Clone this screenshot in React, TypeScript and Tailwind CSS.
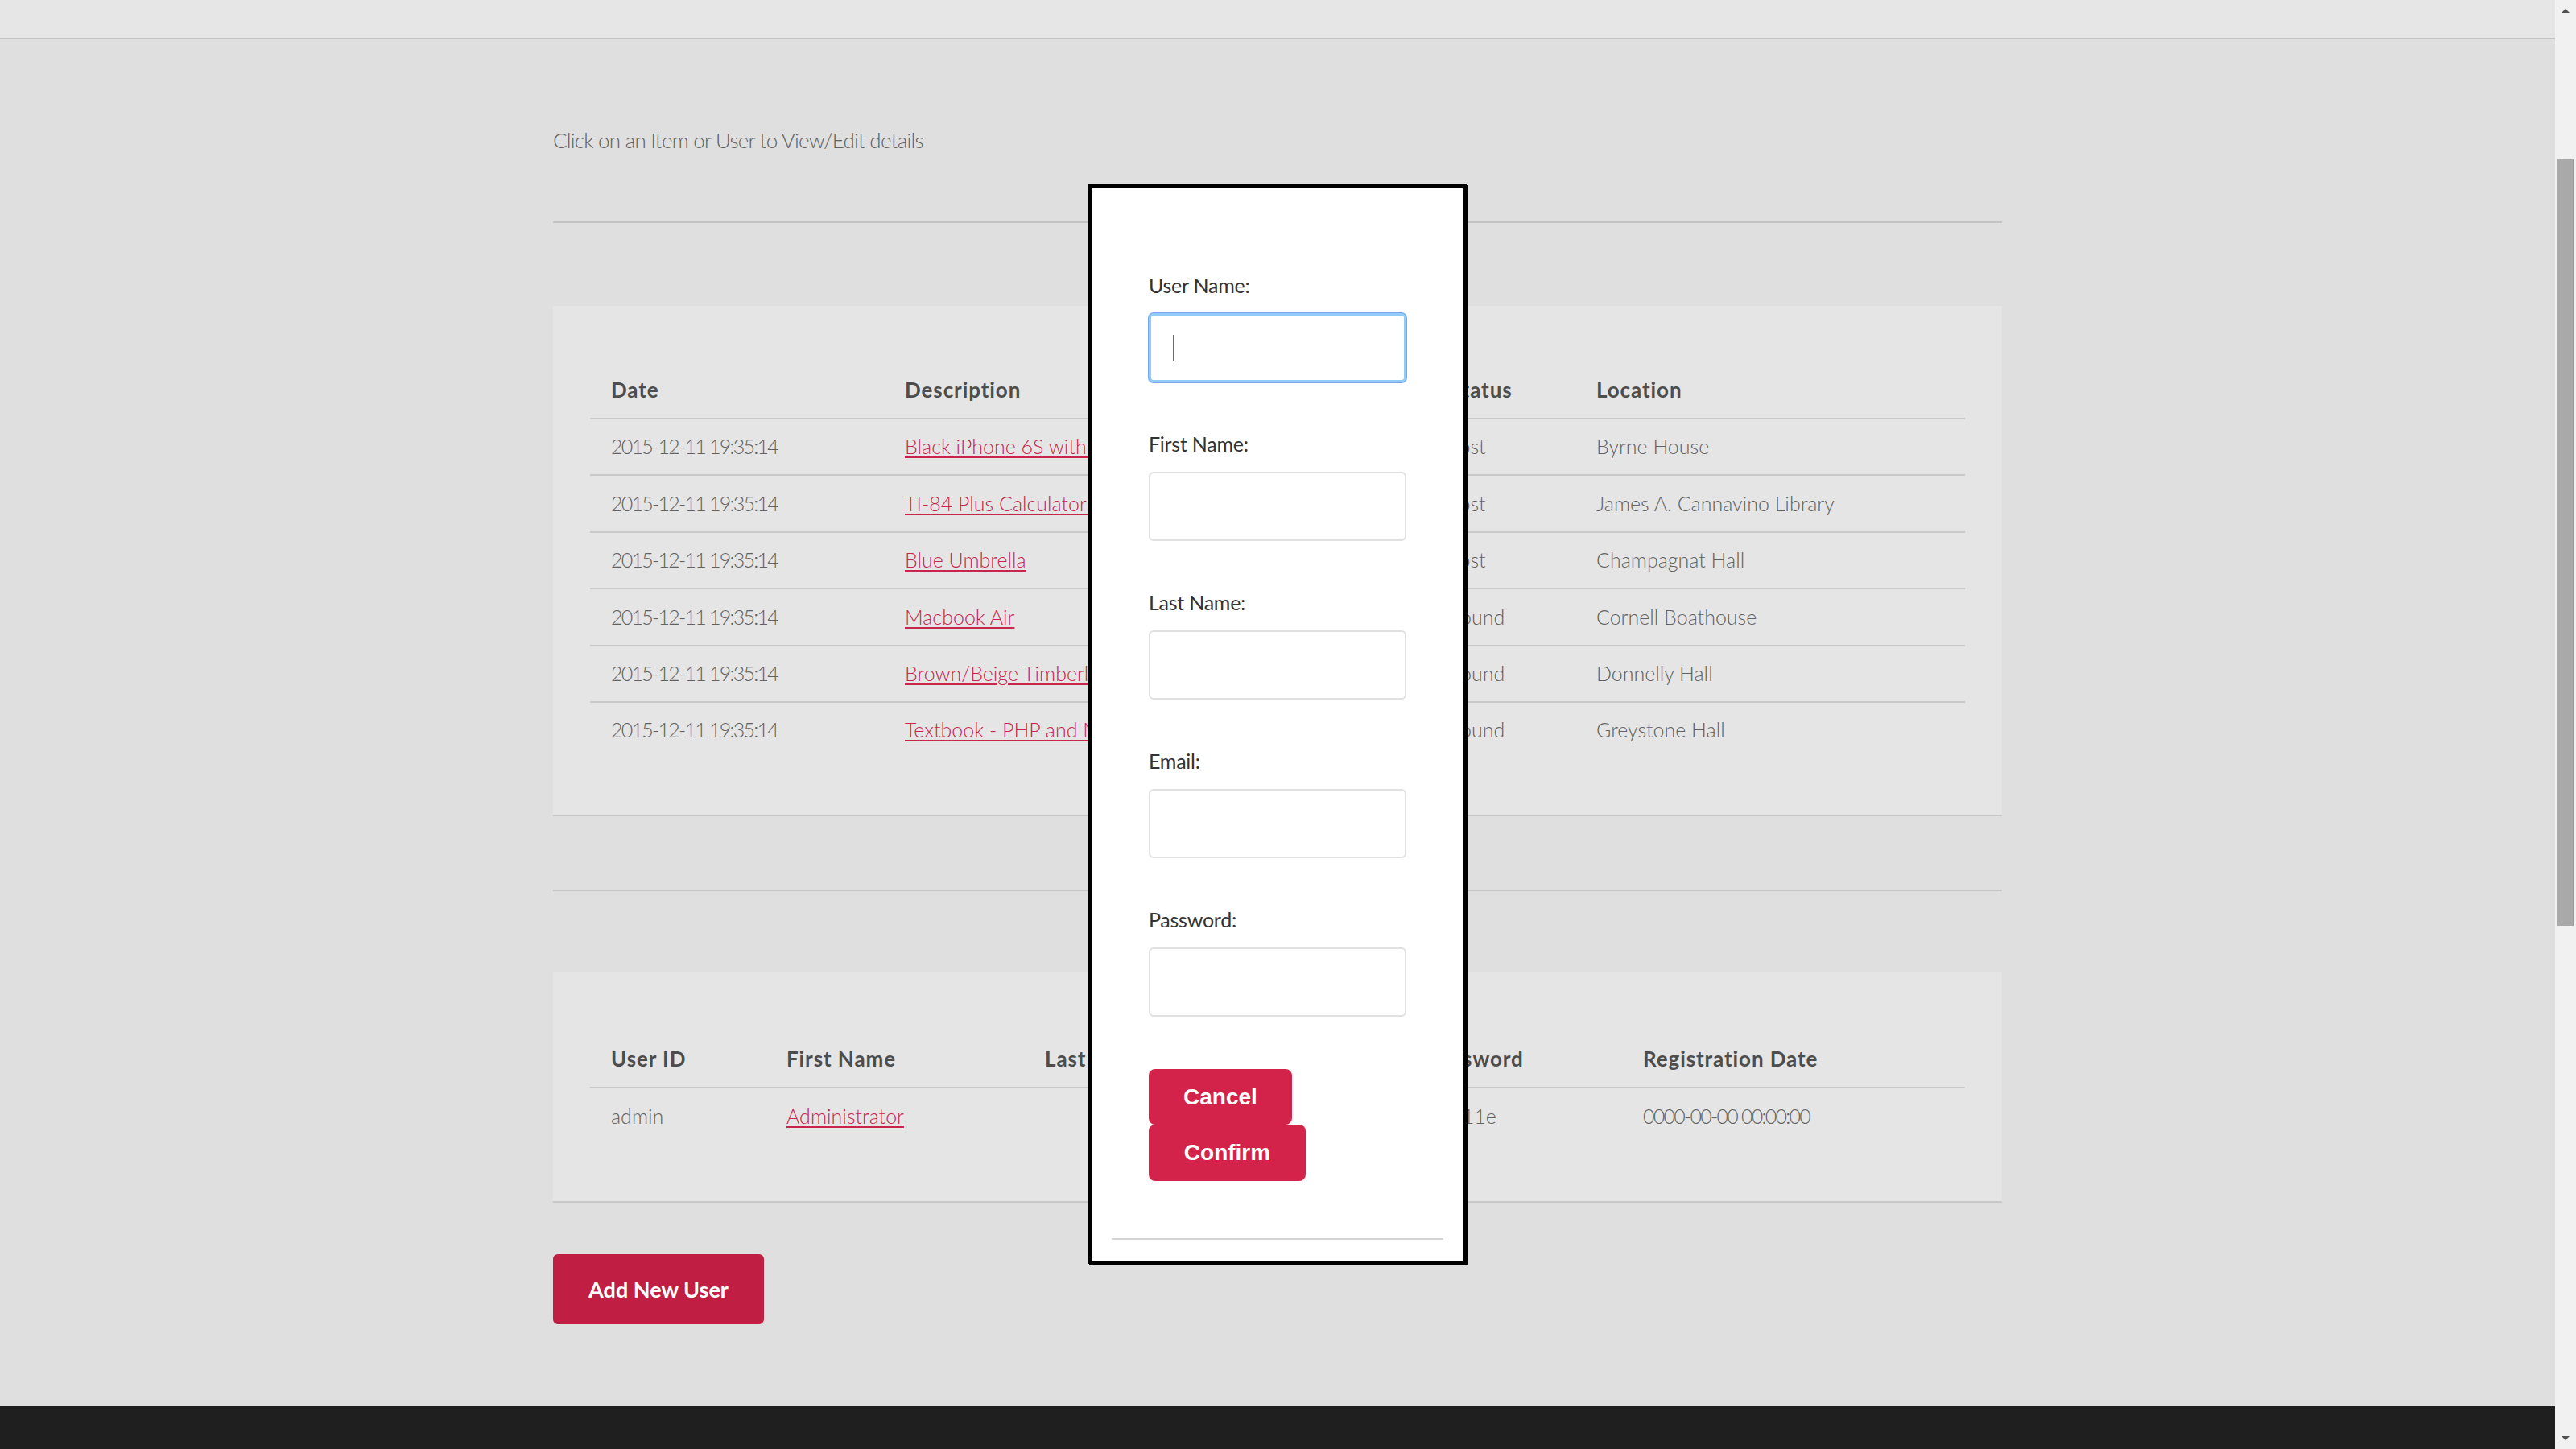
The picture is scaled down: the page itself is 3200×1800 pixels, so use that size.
import React from "react";

const items = [
  { desc: "Black iPhone 6S with red case", status: "Lost", loc: "Byrne House" },
  { desc: "TI-84 Plus Calculator - Silver", status: "Lost", loc: "James A. Cannavino Library" },
  { desc: "Blue Umbrella", status: "Lost", loc: "Champagnat Hall" },
  { desc: "Macbook Air", status: "Found", loc: "Cornell Boathouse" },
  { desc: "Brown/Beige Timberland Boots", status: "Found", loc: "Donnelly Hall" },
  { desc: "Textbook - PHP and MySQL", status: "Found", loc: "Greystone Hall" },
];

function Th({ children }: { children: React.ReactNode }) {
  return (
    <div className="pl-[26px] flex items-center font-bold text-[26px] text-[#4d4d4d] tracking-[0.035em] whitespace-nowrap">
      {children}
    </div>
  );
}

function Td({ children, link, num }: { children?: React.ReactNode; link?: boolean; num?: boolean }) {
  return (
    <div
      className={
        "pl-[26px] flex items-center font-light text-[25px] whitespace-nowrap " +
        (num ? "tracking-[-0.07em] " : "tracking-[0em] ") +
        (link ? "text-[#c8254d] underline underline-offset-[3px]" : "text-[#626262]")
      }
    >
      {children}
    </div>
  );
}

function Field({ label, focused, first }: { label: string; focused?: boolean; first?: boolean }) {
  return (
    <div className={first ? "" : "mt-[58px]"}>
      <div className="h-[36px] leading-[36px] text-[25px] text-[#333333] tracking-[-0.01em]">{label}</div>
      <div
        className={
          "mt-[17px] w-[320px] h-[86px] rounded-[6px] bg-white flex items-center pl-[27px] " +
          (focused
            ? "border-[3px] border-[#90ccf7] shadow-[0_0_0_1px_#7ba6ee]"
            : "border-2 border-[#e0e0e0]")
        }
      >
        {focused && <span className="block w-[2px] h-[33px] bg-[#6a6a6a]" />}
      </div>
    </div>
  );
}

export default function App() {
  return (
    <div className="relative flex w-[3200px] h-[1800px] overflow-hidden font-['Lato',sans-serif]">
      <div className="flex flex-col w-[3174px] h-full bg-[#dfdfdf]">
        <div className="h-[49px] shrink-0 bg-[#e6e6e6] border-b-2 border-[#c3c3c3]" />
        <main className="flex-1">
          <div className="w-[1800px] mx-auto">
            <p className="mt-[105px] h-[40px] leading-[40px] text-[26px] font-light text-[#626262] tracking-[-0.03em]">
              Click on an Item or User to View/Edit details
            </p>
            <div className="mt-[81px] h-[2px] bg-[#c4c4c4]" />

            {/* Items panel */}
            <section className="mt-[103px] bg-[#e5e5e5] border-b-2 border-[#c8c8c8] pt-[70px] pb-[71px] px-[46px]">
              <div className="grid grid-cols-[365px_677px_182px_1fr] h-[69px]">
                <Th>Date</Th>
                <Th>Description</Th>
                <Th>Status</Th>
                <Th>Location</Th>
              </div>
              {items.map((it, i) => (
                <div key={i} className="grid grid-cols-[365px_677px_182px_1fr] h-[70.4px] border-t-2 border-[#c9c9c9]">
                  <Td num>2015-12-11 19:35:14</Td>
                  <Td link>{it.desc}</Td>
                  <Td>{it.status}</Td>
                  <Td>{it.loc}</Td>
                </div>
              ))}
            </section>

            <div className="mt-[91px] h-[2px] bg-[#c4c4c4]" />

            {/* Users panel */}
            <section className="mt-[101px] bg-[#e5e5e5] border-b-2 border-[#c8c8c8] pt-[72px] pb-[71px] px-[46px]">
              <div className="grid grid-cols-[218px_321px_250px_226px_267px_1fr] h-[70px]">
                <Th>User ID</Th>
                <Th>First Name</Th>
                <Th>Last Name</Th>
                <Th>Email</Th>
                <Th>Password</Th>
                <Th>Registration Date</Th>
              </div>
              <div className="grid grid-cols-[218px_321px_250px_226px_267px_1fr] h-[71px] border-t-2 border-[#c9c9c9]">
                <Td>admin</Td>
                <Td link>Administrator</Td>
                <Td></Td>
                <Td></Td>
                <Td>9b011e</Td>
                <Td num>0000-00-00 00:00:00</Td>
              </div>
            </section>

            <button className="mt-[64px] w-[262px] h-[87px] rounded-[6px] bg-[#c01f43] text-white text-[27px] font-bold tracking-[0em]">
              Add New User
            </button>
          </div>
        </main>
        <footer className="h-[53px] shrink-0 bg-[#201f20]" />
      </div>

      {/* scrollbar */}
      <div className="w-[26px] h-full bg-[#f1f1f1] flex flex-col items-center">
        <svg width="10" height="6" viewBox="0 0 10 6" className="mt-[10px]">
          <path d="M0 6 L5 1 L10 6 Z" fill="#505050" />
        </svg>
        <div className="mt-[182px] w-[20px] h-[952px] bg-[#a9a9a9] border-r border-[#9c9c9c]" />
        <div className="flex-1" />
        <svg width="10" height="6" viewBox="0 0 10 6" className="mb-[10px]">
          <path d="M0 0 L5 5 L10 0 Z" fill="#505050" />
        </svg>
      </div>

      {/* modal */}
      <div className="absolute left-[1352px] top-[229px] w-[470px] h-[1341px] bg-white border-4 border-black shadow-[1px_1px_0_#000] flex flex-col">
        <div className="pt-[103px] pl-[71px]">
          <Field label="User Name:" focused first />
          <Field label="First Name:" />
          <Field label="Last Name:" />
          <Field label="Email:" />
          <Field label="Password:" />
          <div className="mt-[65px] flex flex-col items-start font-['Liberation_Sans',Arial,sans-serif] font-bold text-[28px] text-white">
            <button className="w-[178px] h-[69px] rounded-[8px] bg-[#d4234a]">Cancel</button>
            <button className="w-[195px] h-[70px] rounded-[8px] bg-[#d4234a]">Confirm</button>
          </div>
        </div>
        <div className="mt-[71px] mx-[25px] h-[2px] bg-[#d4d4d4]" />
      </div>
    </div>
  );
}
